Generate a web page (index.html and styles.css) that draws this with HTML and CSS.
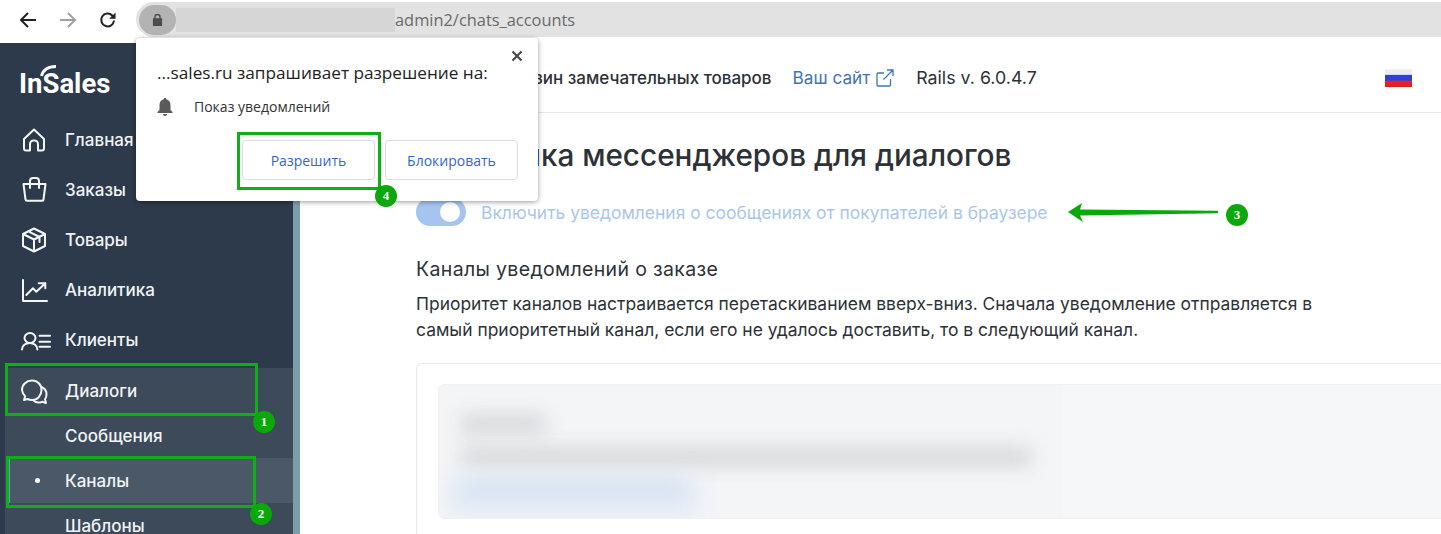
FILE: index.html
```html
<!DOCTYPE html>
<html lang="ru">
<head>
<meta charset="UTF-8" />
<title>InSales</title>
<link rel="stylesheet" href="styles.css">
</head>
<body>

<!-- Browser toolbar -->
<div class="toolbar">
  <svg class="nav-icon back" viewBox="0 0 20 20"><path d="M18 10H3M10 3l-7 7 7 7" /></svg>
  <svg class="nav-icon forward" viewBox="0 0 20 20"><path d="M2 10h15M10 3l7 7-7 7" /></svg>
  <svg class="nav-icon reload" viewBox="0 0 20 20"><path d="M16 10.500a6.400 6.400 0 1 1-1.800-5L16.500 8" /><path class="solid" d="M17.500 2.500v6.300h-6.300z" /></svg>
  <div class="omnibox">
    <div class="lock-chip">
      <svg class="lock" viewBox="0 0 12 14"><path d="M2.500 5V3.800a3.500 3.500 0 0 1 7 0V5H11v8.500H1V5zM4 5h4V3.800a2 2 0 0 0-4 0z" /></svg>
    </div>
    <div class="url-blur"></div>
    <span class="url">admin2/chats_accounts</span>
  </div>
</div>

<div class="app">
  <!-- Sidebar -->
  <div class="sidebar">
    <div class="logo">
      <span>InSales</span>
      <svg class="logo-arc" viewBox="0 0 17 12"><path d="M1.500 11C3 5 8 1.500 16 1.500" /></svg>
    </div>
    <div class="menu-item">
      <svg class="menu-icon" viewBox="0 0 26 26"><path d="M3 12 13 2.500 23 12v9.500a2 2 0 0 1-2 2h-4V17a3.500 3.500 0 0 0-3.500-3.500h-1A3.500 3.500 0 0 0 9 17v6.500H5a2 2 0 0 1-2-2z" /></svg>
      <span>Главная</span>
    </div>
    <div class="menu-item">
      <svg class="menu-icon" viewBox="0 0 26 26"><path d="M2.500 7h22l-2 15.500a1.500 1.500 0 0 1-1.500 1.300H6a1.500 1.500 0 0 1-1.500-1.300zM9 11V4a3 3 0 0 1 3-3h3a3 3 0 0 1 3 3v7" /></svg>
      <span>Заказы</span>
    </div>
    <div class="menu-item">
      <svg class="menu-icon" viewBox="0 0 26 26"><path d="M13 1.500 24 7v12l-11 5.500L2 19V7zM2 7l11 5.500L24 7M13 12.500v12M7.500 4.300 18.500 10v5" /></svg>
      <span>Товары</span>
    </div>
    <div class="menu-item">
      <svg class="menu-icon" viewBox="0 0 26 26"><path d="M2 3v21h24M5.300 18l6.700-6.700 3.300 3.400 9-8.400M17.700 6.300h6.600v5" /></svg>
      <span>Аналитика</span>
    </div>
    <div class="menu-item">
      <svg class="menu-icon" viewBox="0 0 26 26"><ellipse cx="9" cy="11" rx="5.500" ry="5" /><path d="M1 22.500c0-4 3.500-6.500 7.700-6.500s7.700 2.500 7.700 6.500M18.500 8.700H29M18.500 14.700H29M18.500 19.700H29" /></svg>
      <span>Клиенты</span>
    </div>
    <div class="menu-group">
      <div class="menu-item group-head">
        <svg class="menu-icon" viewBox="0 0 26 26"><path d="M11 2.500c5.500 0 9.500 4 9.500 9.500s-4 10-9.500 10c-1.500 0-3-.3-4.300-1L3 22l1.200-3.800A10 10 0 0 1 1 12c0-5.500 4.500-9.500 10-9.500z" /><path d="M20.500 9a8 8 0 0 1 5 7.500c0 1.800-.6 3.400-1.500 4.700L25 25l-4-1.200a8 8 0 0 1-9-1.800" /></svg>
        <span>Диалоги</span>
      </div>
      <div class="submenu-item">Сообщения</div>
      <div class="submenu-item active">Каналы</div>
      <div class="submenu-item">Шаблоны</div>
    </div>
  </div>

  <!-- Main content -->
  <div class="main">
    <div class="topbar">
      <span class="shop-name">Магазин замечательных товаров</span>
      <a class="site-link">Ваш сайт
        <svg class="ext-icon" viewBox="0 0 18 18"><path d="M14.500 10v6a1 1 0 0 1-1 1H2a1 1 0 0 1-1-1V5a1 1 0 0 1 1-1h6M11 1h6v6M17 1 7.500 10.500" /></svg>
      </a>
      <span class="rails">Rails v. 6.0.4.7</span>
      <div class="flag"></div>
    </div>
    <div class="content">
      <h1>Настройка мессенджеров для диалогов</h1>
      <div class="toggle-row">
        <div class="toggle"><div class="toggle-knob"></div></div>
        <span>Включить уведомления о сообщениях от покупателей в браузере</span>
      </div>
      <h2>Каналы уведомлений о заказе</h2>
      <p>Приоритет каналов настраивается перетаскиванием вверх-вниз. Сначала уведомление отправляется в самый приоритетный канал, если его не удалось доставить, то в следующий канал.</p>
      <div class="card">
        <div class="channel">
          <div class="blur-area">
            <div class="blur-line short"></div>
            <div class="blur-line long"></div>
            <div class="blur-line link"></div>
          </div>
        </div>
      </div>
    </div>
  </div>
</div>

<!-- Permission popup -->
<div class="popup">
  <svg class="popup-close" viewBox="0 0 12 12"><path d="M1.500 1.500l9 9M10.500 1.500l-9 9" /></svg>
  <div class="popup-title">...sales.ru запрашивает разрешение на:</div>
  <div class="popup-row">
    <svg class="bell" viewBox="0 0 16 18"><path d="M8 0a1.200 1.200 0 0 1 1.200 1.300C12 2 13.500 4.300 13.500 7v5l2 2v1H.5v-1l2-2V7c0-2.700 1.500-5 4.300-5.700A1.200 1.200 0 0 1 8 0zM6 16h4a2 2 0 0 1-4 0z" /></svg>
    <span>Показ уведомлений</span>
  </div>
  <div class="popup-buttons">
    <button class="popup-btn">Разрешить</button>
    <button class="popup-btn">Блокировать</button>
  </div>
</div>

<!-- Green annotations -->
<div class="mark mark-dialogs"></div>
<div class="mark mark-channels"></div>
<div class="mark mark-allow"></div>
<div class="badge badge-1">1</div>
<div class="badge badge-2">2</div>
<div class="badge badge-3">3</div>
<div class="badge badge-4">4</div>
<svg class="arrow" viewBox="0 0 152 24"><path d="M1 12 15 3l-2 6.500 137 1.200a1.300 1.300 0 0 1 0 2.600L13 15.500 16 22z" /></svg>

</body>
</html>
```

FILE: styles.css
```css
* {
  box-sizing: border-box;
}
html, body {
  margin: 0;
  height: 534px;
  overflow: hidden;
}
body {
  font-family: Inter, sans-serif;
  background: #fff;
  color: #2d3138;
  position: relative;
}
.toolbar {
  height: 43px;
  display: flex;
  align-items: flex-start;
  background: #fff;
  padding: 2px 0 0 18px;
}
.nav-icon {
  width: 20px;
  height: 20px;
  margin-top: 8px;
  fill: none;
  stroke: #222;
  stroke-width: 2;
}
.nav-icon.forward {
  margin-left: 20px;
  stroke: #a0a0a0;
}
.nav-icon.reload {
  margin-left: 20px;
}
.nav-icon .solid {
  fill: #222;
  stroke: none;
}
.omnibox {
  flex: 1;
  height: 35px;
  margin-left: 18px;
  display: flex;
  align-items: center;
  padding-left: 3px;
  background: #e2e2e2;
  border-radius: 18px 0 0 18px;
  font-family: "Open Sans", sans-serif;
  font-size: 16.400px;
  color: #6a6a6a;
}
.lock-chip {
  width: 37px;
  height: 30px;
  display: flex;
  align-items: center;
  justify-content: center;
  background: #b3b3b3;
  border-radius: 15px;
}
.lock {
  width: 11px;
  height: 14px;
  fill: #4d4d4d;
}
.url-blur {
  width: 219px;
  height: 24px;
  background: #d6d6d6;
}
.app {
  display: flex;
  height: 491px;
  overflow: hidden;
}
.sidebar {
  width: 300px;
  flex-shrink: 0;
  background: #2c3a4b;
  border-right: 7px solid #7e9dab;
  color: #fff;
  overflow: hidden;
}
.logo {
  height: 72px;
  padding: 23px 0 0 19px;
  font-family: Roboto, sans-serif;
  font-size: 27.500px;
  font-weight: 700;
  position: relative;
  line-height: 36px;
}
.logo-arc {
  position: absolute;
  left: 40px;
  top: 22px;
  width: 17px;
  height: 12px;
  fill: none;
  stroke: #fff;
  stroke-width: 3;
}
.menu-item {
  height: 50px;
  display: flex;
  align-items: center;
  font-size: 17px;
  font-weight: 500;
  color: #f1f3f5;
}
.menu-item.group-head {
  height: 45px;
}
.menu-icon {
  width: 26px;
  height: 26px;
  margin: 0 18px 0 21px;
  flex-shrink: 0;
  overflow: visible;
  fill: none;
  stroke: #f4f6f8;
  stroke-width: 2;
  stroke-linejoin: round;
  stroke-linecap: round;
}
.menu-group {
  margin: 3px 0 0 5px;
  background: #3c4a5a;
}
.group-head .menu-icon {
  margin-left: 16px;
}
.submenu-item {
  height: 45px;
  display: flex;
  align-items: center;
  padding-left: 60px;
  font-size: 17px;
  font-weight: 500;
  color: #f1f3f5;
  position: relative;
}
.submenu-item.active {
  margin-left: 4px;
  padding-left: 55px;
  background: #4a5867;
  border-left: 1px solid #5b9bd0;
}
.submenu-item.active::before {
  content: "";
  position: absolute;
  left: 25px;
  top: 20px;
  width: 5px;
  height: 5px;
  border-radius: 50%;
  background: #fff;
}
.main {
  flex: 1;
  min-width: 0;
  overflow: hidden;
}
.topbar {
  height: 70px;
  display: flex;
  align-items: center;
  padding: 0 29px 0 192px;
  border-bottom: 1px solid #e6e8ea;
}
.shop-name {
  font-weight: 500;
  font-size: 17px;
}
.site-link {
  margin-left: 21px;
  color: #3f74ba;
  font-size: 17.200px;
  display: flex;
  align-items: center;
  gap: 6px;
}
.ext-icon {
  width: 18px;
  height: 18px;
  fill: none;
  stroke: #3f74ba;
  stroke-width: 1.300;
}
.rails {
  margin-left: 22px;
  font-size: 17.800px;
}
.flag {
  width: 27px;
  height: 18px;
  margin-left: auto;
  background: linear-gradient(#f0f0f5 0, #e8e8f2 30%, #2f3fdc 36%, #2f3fdc 62%, #ea2228 68%, #d81e26 100%);
}
.content {
  padding: 22px 0 0 116px;
}
h1 {
  margin: 0;
  font-size: 29.700px;
  font-weight: 500;
  line-height: 40px;
}
.toggle-row {
  display: flex;
  align-items: center;
  gap: 15px;
  margin-top: 23px;
  color: #a9c6ec;
  font-size: 17.460px;
}
.toggle {
  width: 50px;
  height: 28px;
  border-radius: 14px;
  background: #a6c4f0;
  padding: 4px 4px 4px 24px;
}
.toggle-knob {
  width: 20px;
  height: 20px;
  border-radius: 50%;
  background: #fff;
}
h2 {
  margin: 30px 0 0;
  font-size: 19.500px;
  letter-spacing: 0.35px;
  font-weight: 400;
  line-height: 26px;
}
p {
  margin: 9px 0 0;
  width: 920px;
  font-size: 17.460px;
  line-height: 26px;
}
.card {
  margin-top: 20px;
  height: 171px;
  padding: 20px 0 0 21px;
  border: 1px solid #e8e9eb;
  border-width: 1px 0 0 1px;
  border-radius: 6px 0 0 0;
}
.channel {
  height: 135px;
  background: #f6f7f9;
  border: 1px solid #f0f1f3;
  border-right: 0;
  border-radius: 6px 0 0 6px;
  overflow: hidden;
}
.blur-area {
  width: 624px;
  height: 100%;
  display: flex;
  flex-direction: column;
  gap: 17px;
  padding: 31px 0 0 22px;
  background: #f4f5f7;
  overflow: hidden;
}
.blur-line {
  height: 16px;
  flex-shrink: 0;
  filter: blur(10px);
  background: #cfd1d4;
}
.blur-line.short {
  width: 85px;
}
.blur-line.long {
  width: 570px;
}
.blur-line.link {
  width: 225px;
  height: 14px;
  background: #cfdef1;
  box-shadow: 0 8px 0 14px #e6ecf5;
}

/* permission popup */
.popup {
  position: absolute;
  left: 136px;
  top: 38px;
  width: 402px;
  height: 163px;
  padding: 24px 20px 0 21px;
  background: #fff;
  border-radius: 4px;
  box-shadow: 0 1px 5px rgba(0, 0, 0, 0.4);
  font-family: "Open Sans", sans-serif;
}
.popup-close {
  position: absolute;
  right: 15px;
  top: 12px;
  width: 12px;
  height: 12px;
  fill: none;
  stroke: #444;
  stroke-width: 2;
}
.popup-title {
  font-size: 17.200px;
  line-height: 22px;
  color: #222;
}
.popup-row {
  display: flex;
  align-items: center;
  margin-top: 13px;
  font-size: 14px;
  color: #333;
}
.bell {
  width: 16px;
  height: 18px;
  margin-right: 21px;
  fill: #5a5a5a;
}
.popup-buttons {
  display: flex;
  justify-content: flex-end;
  gap: 10px;
  margin-top: 24px;
}
.popup-btn {
  width: 133px;
  height: 40px;
  background: #fff;
  border: 1px solid #dadce0;
  border-radius: 4px;
  color: #3367c6;
  font-family: "Open Sans", sans-serif;
  font-size: 14px;
  font-weight: 500;
}

/* annotations */
.mark {
  position: absolute;
  border: 3px solid #0fae16;
}
.mark-dialogs {
  left: 5px;
  top: 363px;
  width: 253px;
  height: 53px;
}
.mark-channels {
  left: 6px;
  top: 456px;
  width: 250px;
  height: 52px;
}
.mark-allow {
  left: 237px;
  top: 132px;
  width: 144px;
  height: 58px;
}
.badge {
  position: absolute;
  width: 22px;
  height: 22px;
  border-radius: 50%;
  background: #0aa80a;
  color: #fff;
  font-family: "Liberation Serif", serif;
  font-size: 13px;
  font-weight: 700;
  text-align: center;
  line-height: 22px;
}
.badge-1 {
  left: 253px;
  top: 411px;
}
.badge-2 {
  left: 250px;
  top: 503px;
}
.badge-3 {
  left: 1226px;
  top: 204px;
}
.badge-4 {
  left: 375px;
  top: 185px;
}
.arrow {
  position: absolute;
  left: 1067px;
  top: 200px;
  width: 152px;
  height: 24px;
  fill: #0aa80a;
}
```
